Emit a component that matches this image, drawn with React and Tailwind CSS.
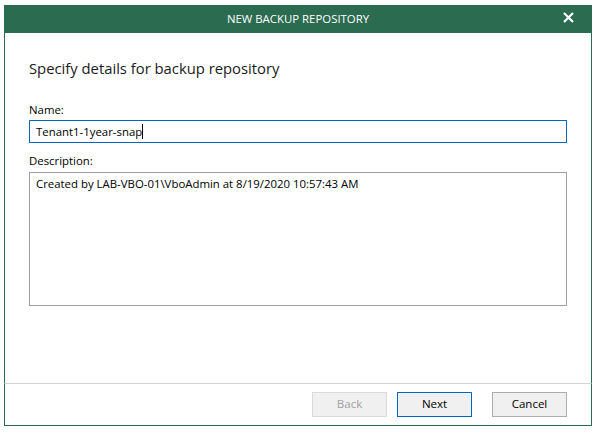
const font = "font-['Segoe_UI','Open_Sans',sans-serif]"

function Button({ label, variant }) {
  const styles = {
    disabled: 'bg-[#f0f0f0] border-[#dadada] text-[#a0a0a0]',
    primary: 'bg-[#f0f0f0] border-[#0067c0] text-black',
    default: 'bg-[#f0f0f0] border-[#adadad] text-black',
  }
  return (
    <button
      className={`w-[75px] h-[25px] border text-[11.5px] leading-none ${styles[variant]}`}
    >
      {label}
    </button>
  )
}

export default function App() {
  return (
    <div className={`w-full h-[433px] bg-white pt-[5px] pl-[4px] ${font}`}>
      <div className="w-[588px] h-[421px] flex flex-col bg-white">
        {/* title bar */}
        <div className="h-[28px] bg-[#2b6b50] flex items-center justify-center relative text-white text-[11.4px]">
          NEW BACKUP REPOSITORY
          <svg className="absolute right-[18px] top-[7px]" width="11" height="11" viewBox="0 0 11 11">
            <path d="M1 1 L10 10 M10 1 L1 10" stroke="white" strokeWidth="2.2" />
          </svg>
        </div>

        {/* body */}
        <div className="flex-1 flex flex-col border-x border-[#2b6b50] px-[24px]">
          <h1 className="mt-[24px] text-[14.8px] leading-[22px] text-[#1a1a1a]">
            Specify details for backup repository
          </h1>

          <label className="mt-[23px] text-[11.4px] leading-[16px] text-black">Name:</label>
          <div className="mt-[2px] h-[23px] border border-[#0067c0] flex items-center px-[6px] text-[11.4px] text-black">
            Tenant1-1year-snap
            <span className="w-px h-[15px] bg-black" />
          </div>

          <label className="mt-[10px] text-[11.4px] leading-[16px] text-black">Description:</label>
          <div className="mt-[3px] h-[134px] border border-[#a0a0a0] px-[6px] pt-[3px] text-[11.4px] leading-[16px] text-black">
            Created by LAB-VBO-01\VboAdmin at 8/19/2020 10:57:43 AM
          </div>
        </div>

        {/* footer */}
        <div className="h-[43px] border-t border-[#d4d4d4] border-x border-b border-x-[#2b6b50] border-b-[#2b6b50] flex items-center justify-end pr-[24px] pb-[1px]">
          <Button label="Back" variant="disabled" />
          <div className="w-[10px]" />
          <Button label="Next" variant="primary" />
          <div className="w-[20px]" />
          <Button label="Cancel" variant="default" />
        </div>
      </div>
    </div>
  )
}
